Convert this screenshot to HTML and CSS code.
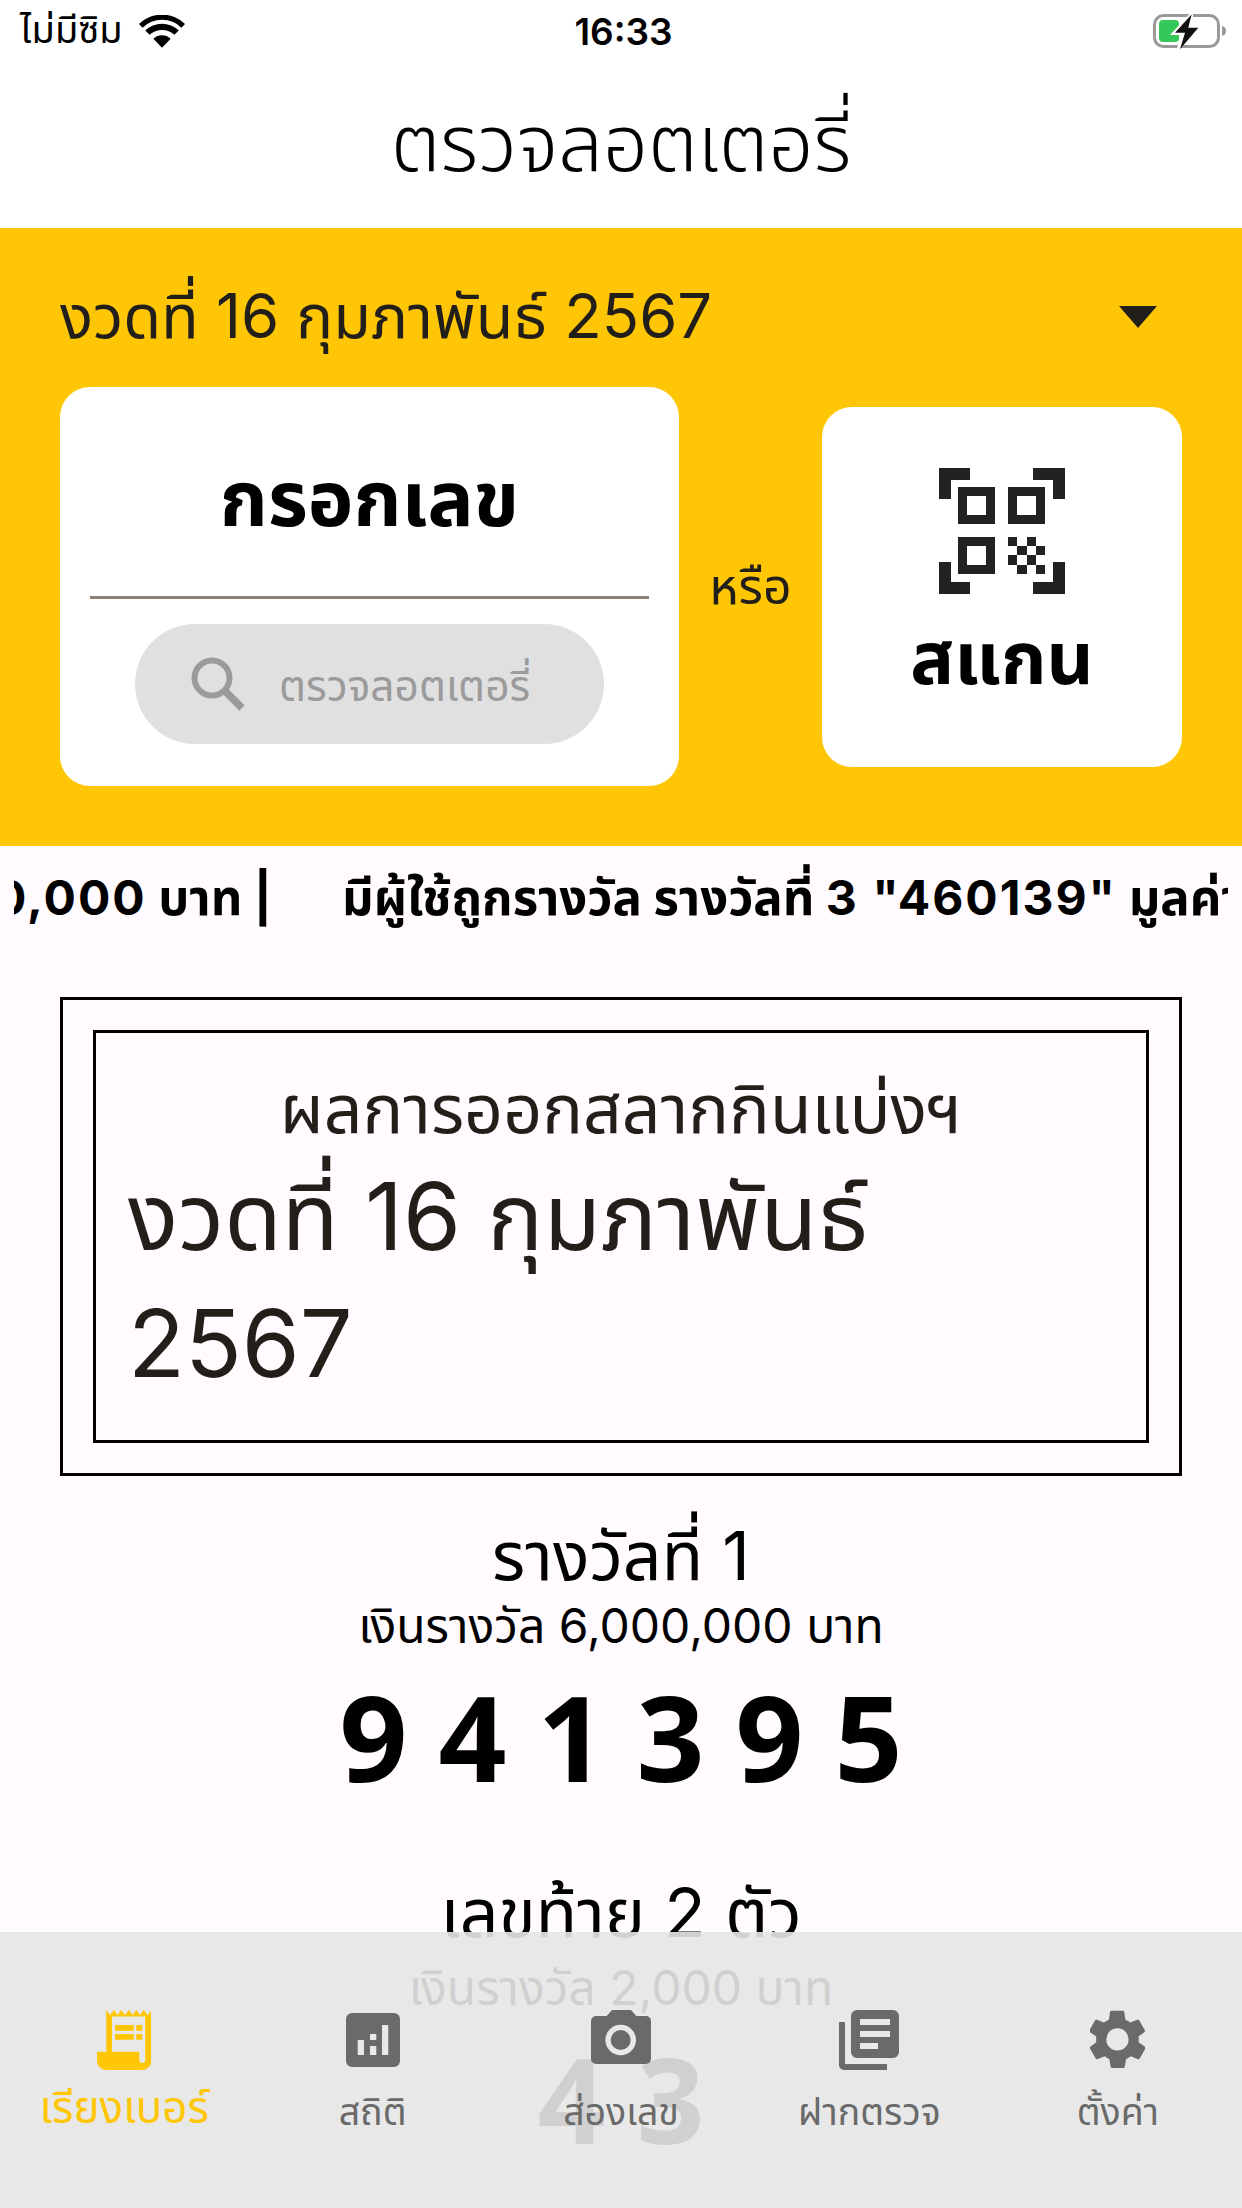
FILE: index.html
```html
<!DOCTYPE html>
<html lang="th">
<head>
    <meta charset="UTF-8">
    <title>ตรวจลอตเตอรี่</title>
    <link rel="stylesheet" href="styles.css">
</head>
<body>
    <div class="page">
        <div class="statusbar">
            <div class="carrier">
                <span>ไม่มีซิม</span>
                <svg class="wifi" viewBox="0 0 48 34"><path d="M24 34 15 24.500a13 13 0 0 1 18 0zM11 20.500 6.500 16a25 25 0 0 1 35 0L37 20.500a19 19 0 0 0-26 0zM3.700 13 0 9.300a34 34 0 0 1 48 0L44.300 13a29 29 0 0 0-40.600 0z" fill="#000"/></svg>
            </div>
            <div class="clock">16:33</div>
            <svg class="battery" viewBox="0 0 74 36">
                <rect x="1.500" y="2.500" width="64" height="31" rx="9" fill="none" stroke="#999" stroke-width="3"/>
                <path d="M69 13c3 .5 4 2.500 4 5s-1 4.500-4 5z" fill="#999"/>
                <rect x="6" y="7" width="20" height="22" rx="4" fill="#34c759"/>
                <path d="M40 -3 17 22h11l-5 17 27-27H40z" fill="#fff"/>
                <path d="M38.700 1.300 22 19.700h10l-5 16.600 18.300-21.600h-10z" fill="#111"/>
            </svg>
        </div>
        <header class="title">ตรวจลอตเตอรี่</header>

        <section class="panel">
            <div class="draw-select">
                <span>งวดที่ 16 กุมภาพันธ์ 2567</span>
                <i class="caret"></i>
            </div>
            <div class="panel-row">
                <div class="card card-type">
                    <div class="card-title">กรอกเลข</div>
                    <div class="rule"></div>
                    <div class="search">
                        <svg class="search-icon" viewBox="0 0 55 55" fill="none" stroke="#9b9b9b">
                            <circle cx="21" cy="21" r="17.500" stroke-width="6"/>
                            <path d="M33 33 51 51" stroke-width="7.500"/>
                        </svg>
                        <span>ตรวจลอตเตอรี่</span>
                    </div>
                </div>
                <div class="or">หรือ</div>
                <div class="card card-scan">
                    <svg class="qr" viewBox="0 0 126 126" fill="#222">
                        <path d="M0 0h31v12H12v19H0zM94 0h32v31h-12V12H94zM0 94h12v20h19v12H0zM114 94h12v32H94v-12h20z"/>
                        <path fill-rule="evenodd" d="M19 19h37v37H19zm9 9v19h19V28zM69 19h37v37H69zm9 9v19h19V28zM19 69h37v37H19zm9 9v19h19V78z"/>
                        <path d="M69 69h9v9h-9zM88 69h9v9h-9zM78 78h10v9H78zM97 78h9v9h-9zM69 87h9v10h-9zM88 87h9v10h-9zM78 97h10v9H78zM97 97h9v9h-9z"/>
                    </svg>
                    <div class="card-title">สแกน</div>
                </div>
            </div>
        </section>

        <div class="ticker">
            <div class="ticker-text"><span class="num">0,000</span> บาท |<span class="ticker-next">มีผู้ใช้ถูกรางวัล รางวัลที่ <span class="num">3 "460139"</span> มูลค่า <span class="num">80,000</span> บาท |</span></div>
        </div>

        <main class="results">
            <div class="frame">
                <div class="frame-inner">
                    <div class="frame-head">ผลการออกสลากกินแบ่งฯ</div>
                    <div class="frame-date">งวดที่ 16 กุมภาพันธ์ 2567</div>
                </div>
            </div>
            <div class="prize">
                <div class="prize-name">รางวัลที่ 1</div>
                <div class="prize-value">เงินรางวัล 6,000,000 บาท</div>
                <div class="prize-number">9 4 1 3 9 5</div>
            </div>
            <div class="prize prize-next">
                <div class="prize-name">เลขท้าย 2 ตัว</div>
                <div class="prize-value">เงินรางวัล 2,000 บาท</div>
                <div class="prize-number">4 3</div>
            </div>
        </main>

        <nav class="tabbar">
            <div class="tab active">
                <svg viewBox="0 0 54.300 60">
                    <path fill-rule="evenodd" d="M9.300 0l3.750 5 3.750-5 3.750 5 3.750-5 3.750 5 3.750-5 3.750 5 3.750-5 3.750 5 3.750-5 3.750 5 3.750-5V51a9 9 0 0 1-9 9H9a9 9 0 0 1-9-9V41.700h9.300zM15 6.500v35.200h27.300V50a3 3 0 0 0 6 0V6.500z"/>
                    <path d="M18 15h18.700v5.700H18zM39.300 15h6v5.700h-6zM18 24h18.700v5.700H18zM39.300 24h6v5.700h-6z"/>
                </svg>
                <span>เรียงเบอร์</span>
            </div>
            <div class="tab">
                <svg viewBox="0 -3 54 60"><path fill-rule="evenodd" d="M6 0h42a6 6 0 0 1 6 6v42a6 6 0 0 1-6 6H6a6 6 0 0 1-6-6V6a6 6 0 0 1 6-6zM11.700 27v15H18V27zM24 21v6h6.300v-6zm0 12v9h6.300v-9zM36 12v30h6.300V12z"/></svg>
                <span>สถิติ</span>
            </div>
            <div class="tab">
                <svg viewBox="0 0 60 60"><path fill-rule="evenodd" d="M21 0h19l5.300 6H55a5 5 0 0 1 5 5v38a5 5 0 0 1-5 5H5a5 5 0 0 1-5-5V11a5 5 0 0 1 5-5h10.700zM29.700 14.700a15.300 15.300 0 1 0 0 30.600 15.300 15.300 0 0 0 0-30.600zm0 5.300a10 10 0 1 1 0 20 10 10 0 0 1 0-20z"/></svg>
                <span>ส่องเลข</span>
            </div>
            <div class="tab">
                <svg viewBox="0 0 60 60"><path fill-rule="evenodd" d="M18 0h36a6 6 0 0 1 6 6v36a6 6 0 0 1-6 6H18a6 6 0 0 1-6-6V6a6 6 0 0 1 6-6zm3 9v6h30V9zm0 12v6h30v-6zm0 12v6h18v-6z"/><path d="M0 12h6v42h42v6H5a5 5 0 0 1-5-5z"/></svg>
                <span>ฝากตรวจ</span>
            </div>
            <div class="tab">
                <svg viewBox="2.400 1.700 19.200 21"><path fill-rule="evenodd" d="M19.400 13a7.500 7.500 0 0 0 0-2l2.100-1.600a.5.5 0 0 0 .1-.6l-2-3.500a.5.5 0 0 0-.6-.2l-2.500 1a7.300 7.300 0 0 0-1.700-1l-.4-2.600a.5.5 0 0 0-.5-.5h-4a.5.5 0 0 0-.5.400l-.4 2.700a7.700 7.700 0 0 0-1.700 1l-2.500-1a.5.5 0 0 0-.6.200l-2 3.500a.5.5 0 0 0 .1.600L4.600 11a7.900 7.900 0 0 0 0 2l-2.100 1.600a.5.5 0 0 0-.1.600l2 3.500c.1.200.4.300.6.200l2.500-1c.5.400 1.100.7 1.700 1l.4 2.600c0 .3.200.5.500.5h4c.2 0 .5-.2.500-.4l.4-2.700c.6-.3 1.200-.6 1.700-1l2.500 1c.2.100.5 0 .6-.2l2-3.500a.5.5 0 0 0-.1-.6zM12 15.900a3.900 3.900 0 1 1 0-7.800 3.900 3.900 0 0 1 0 7.800z"/></svg>
                <span>ตั้งค่า</span>
            </div>
        </nav>
    </div>
</body>
</html>
```
FILE: styles.css
```css
* {
    box-sizing: border-box;
}
html, body {
    margin: 0;
    padding: 0;
}
body {
    font-family: "Inter", "Noto Sans Thai", "Noto Sans", sans-serif;
    color: #000;
    background-color: #fffbff;
}
.page {
    position: relative;
    width: 1242px;
    height: 2208px;
    overflow: hidden;
}
.statusbar {
    height: 62px;
    padding: 0 15px 0 20px;
    display: grid;
    grid-template-columns: 1fr auto 1fr;
    align-items: center;
    background-color: #fff;
}
.carrier {
    display: flex;
    align-items: center;
    gap: 16px;
    font-size: 38px;
}
.wifi {
    width: 46px;
    height: 33px;
}
.clock {
    font-size: 37px;
    font-weight: 600;
}
.battery {
    width: 74px;
    height: 36px;
    justify-self: end;
}
.title {
    height: 166px;
    background-color: #fff;
    text-align: center;
    font-size: 79px;
    line-height: 160px;
    font-weight: 300;
}
.panel {
    height: 618px;
    padding: 60px 60px 0;
    background-color: #ffc605;
}
.draw-select {
    display: flex;
    justify-content: space-between;
    align-items: center;
    height: 60px;
    padding-right: 25px;
    font-size: 61.500px;
    color: #221f1a;
}
.draw-select span {
    padding-top: 3px;
}
.caret {
    width: 0;
    height: 0;
    border-left: 19px solid transparent;
    border-right: 19px solid transparent;
    border-top: 22px solid #221f1a;
    margin-bottom: 2px;
}
.panel-row {
    display: flex;
    align-items: center;
    margin-top: 39px;
}
.card {
    background-color: #fff;
    border-radius: 30px;
    display: flex;
    flex-direction: column;
    align-items: center;
}
.card-type {
    width: 619px;
    height: 399px;
    padding: 0 30px;
}
.card-scan {
    width: 360px;
    height: 360px;
    padding-top: 61px;
}
.card-title {
    font-size: 73px;
    font-weight: 700;
    line-height: 100px;
}
.card-type .card-title {
    height: 209px;
    font-size: 77px;
    line-height: 222px;
}
.card-scan .card-title {
    padding-top: 6px;
}
.rule {
    width: 100%;
    height: 3px;
    background-color: #8c8075;
}
.search {
    width: 469px;
    height: 120px;
    margin-top: 25px;
    padding-left: 56px;
    border-radius: 60px;
    background-color: #e1e0e1;
    display: flex;
    align-items: center;
    gap: 33px;
    font-size: 42.500px;
    color: #9b9b9b;
}
.search span {
    padding-top: 8px;
}
.search-icon {
    width: 55px;
    height: 55px;
}
.or {
    width: 143px;
    padding-top: 4px;
    text-align: center;
    font-size: 50px;
    color: #221f1a;
}
.qr {
    width: 126px;
    height: 126px;
    margin-bottom: 8px;
}
.ticker {
    height: 104px;
    margin: 0 14px;
    overflow: hidden;
}
.ticker-text {
    white-space: nowrap;
    margin-left: -20px;
    font-size: 49px;
    font-weight: 700;
    line-height: 104px;
}
.num {
    font-size: 48px;
    letter-spacing: 2px;
}
.ticker-next {
    margin-left: 70px;
}
.results {
    padding: 47px 60px 0;
}
.frame {
    border: 3px solid #000;
    padding: 30px;
}
.frame-inner {
    border: 3px solid #000;
    height: 413px;
    padding: 30px 90px 0 32px;
    color: #221f1a;
}
.frame-head {
    margin: 0 -90px 0 -32px;
    text-align: center;
    font-size: 68px;
    line-height: 90px;
}
.frame-date {
    font-size: 93.500px;
    line-height: 127px;
}
.prize {
    text-align: center;
}
.prize-name {
    margin-top: 34px;
    font-size: 68px;
    line-height: 90px;
}
.prize-value {
    margin-top: -4px;
    font-size: 48px;
    line-height: 60px;
}
.prize-number {
    font-family: "Noto Sans", sans-serif;
    font-size: 119px;
    font-weight: 700;
    line-height: 160px;
}
.prize-next .prize-name {
    margin-top: 51px;
}
.prize-next .prize-value {
    margin-top: 1px;
}
.tabbar {
    position: absolute;
    left: 0;
    right: 0;
    bottom: 0;
    height: 276px;
    padding-top: 78px;
    display: grid;
    grid-template-columns: repeat(5, 1fr);
    background-color: rgba(230, 230, 230, 0.906);
}
.tab {
    display: flex;
    flex-direction: column;
    align-items: center;
    font-size: 37.500px;
    line-height: 60px;
    color: #6a6a6a;
    fill: #6a6a6a;
}
.tab svg {
    height: 60px;
    margin-bottom: 12px;
}
.tab.active {
    color: #ffc605;
    fill: #ffc605;
    font-size: 44px;
}
.tab.active span {
    margin-top: -5px;
}
```
